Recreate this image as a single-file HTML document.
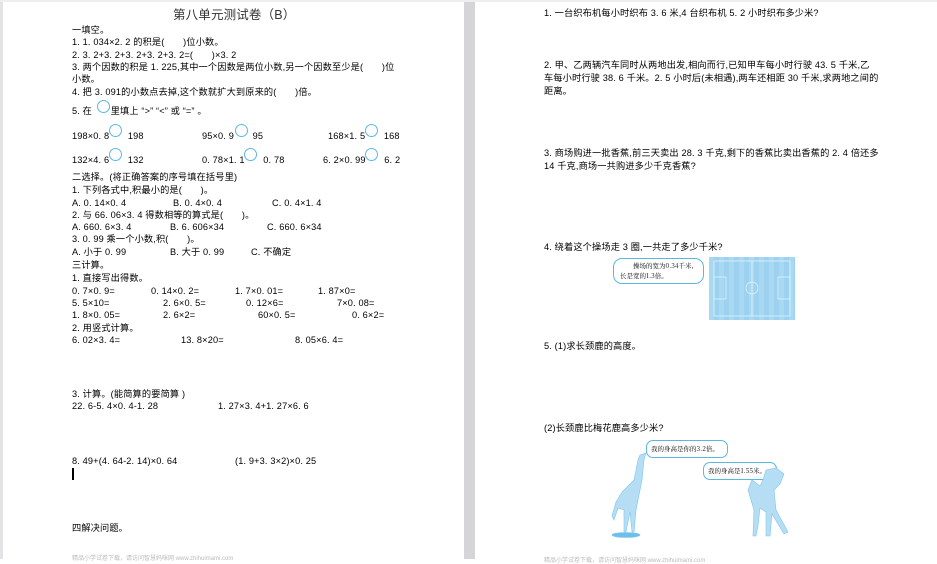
<!DOCTYPE html>
<html><head><meta charset="utf-8"><style>
body{margin:0;width:937px;height:559px;background:#fff;position:relative;overflow:hidden;font-family:"Liberation Sans","Noto Sans CJK SC",sans-serif;font-size:9.2px;color:#000;}
.t{position:absolute;white-space:nowrap;line-height:10px;letter-spacing:0.15px}
.c{position:absolute;width:13px;height:13px;border:1.3px solid #5ab8e0;border-radius:50%;box-sizing:border-box;}
.f{position:absolute;font-size:6px;color:#bbb;white-space:nowrap}
</style></head><body>
<div style="position:absolute;left:0;top:0;width:3px;height:559px;background:#e3e3e5"></div>
<div style="position:absolute;left:464px;top:0;width:11px;height:559px;background:#d5d5d7"></div>
<div style="position:absolute;left:0;top:0;width:937px;height:2px;background:#eee"></div>

<div class="t" style="left:173px;top:8px;font-size:12.5px;line-height:14px;color:#333">第八单元测试卷（B）</div>
<div class="t" style="left:72px;top:25px">一填空。</div>
<div class="t" style="left:72px;top:37px">1. 1. 034×2. 2 的积是(　　)位小数。</div>
<div class="t" style="left:72px;top:50px">2. 3. 2+3. 2+3. 2+3. 2+3. 2=(　　)×3. 2</div>
<div class="t" style="left:72px;top:62px">3. 两个因数的积是 1. 225,其中一个因数是两位小数,另一个因数至少是(　　)位</div>
<div class="t" style="left:72px;top:74px">小数。</div>
<div class="t" style="left:72px;top:87px">4. 把 3. 091的小数点去掉,这个数就扩大到原来的(　　)倍。</div>
<div class="t" style="left:72px;top:106px">5. 在　　里填上 “>” “<” 或 “=” 。</div>
<div class="c" style="left:97px;top:100px"></div>
<div class="t" style="left:72px;top:131px">198×0. 8　　198</div><div class="c" style="left:109px;top:124px"></div>
<div class="t" style="left:202px;top:131px">95×0. 9　　95</div><div class="c" style="left:235px;top:124px"></div>
<div class="t" style="left:328px;top:131px">168×1. 5　　168</div><div class="c" style="left:365px;top:124px"></div>
<div class="t" style="left:72px;top:155px">132×4. 6　　132</div><div class="c" style="left:109px;top:148px"></div>
<div class="t" style="left:202px;top:155px">0. 78×1. 1　　0. 78</div><div class="c" style="left:244px;top:148px"></div>
<div class="t" style="left:323px;top:155px">6. 2×0. 99　　6. 2</div><div class="c" style="left:365px;top:148px"></div>
<div class="t" style="left:72px;top:172px">二选择。(将正确答案的序号填在括号里)</div>
<div class="t" style="left:72px;top:185px">1. 下列各式中,积最小的是(　　)。</div>
<div class="t" style="left:72px;top:198px">A. 0. 14×0. 4</div><div class="t" style="left:173px;top:198px">B. 0. 4×0. 4</div><div class="t" style="left:272px;top:198px">C. 0. 4×1. 4</div>
<div class="t" style="left:72px;top:210px">2. 与 66. 06×3. 4 得数相等的算式是(　　)。</div>
<div class="t" style="left:72px;top:222px">A. 660. 6×3. 4</div><div class="t" style="left:170px;top:222px">B. 6. 606×34</div><div class="t" style="left:267px;top:222px">C. 660. 6×34</div>
<div class="t" style="left:72px;top:234px">3. 0. 99 乘一个小数,积(　　)。</div>
<div class="t" style="left:72px;top:247px">A. 小于 0. 99</div><div class="t" style="left:170px;top:247px">B. 大于 0. 99</div><div class="t" style="left:251px;top:247px">C. 不确定</div>
<div class="t" style="left:72px;top:260px">三计算。</div>
<div class="t" style="left:72px;top:273px">1. 直接写出得数。</div>
<div class="t" style="left:72px;top:286px">0. 7×0. 9=</div><div class="t" style="left:151px;top:286px">0. 14×0. 2=</div><div class="t" style="left:235px;top:286px">1. 7×0. 01=</div><div class="t" style="left:318px;top:286px">1. 87×0=</div>
<div class="t" style="left:72px;top:298px">5. 5×10=</div><div class="t" style="left:163px;top:298px">2. 6×0. 5=</div><div class="t" style="left:246px;top:298px">0. 12×6=</div><div class="t" style="left:337px;top:298px">7×0. 08=</div>
<div class="t" style="left:72px;top:310px">1. 8×0. 05=</div><div class="t" style="left:163px;top:310px">2. 6×2=</div><div class="t" style="left:258px;top:310px">60×0. 5=</div><div class="t" style="left:352px;top:310px">0. 6×2=</div>
<div class="t" style="left:72px;top:323px">2. 用竖式计算。</div>
<div class="t" style="left:72px;top:335px">6. 02×3. 4=</div><div class="t" style="left:181px;top:335px">13. 8×20=</div><div class="t" style="left:295px;top:335px">8. 05×6. 4=</div>
<div class="t" style="left:72px;top:389px">3. 计算。(能简算的要简算 )</div>
<div class="t" style="left:72px;top:401px">22. 6-5. 4×0. 4-1. 28</div><div class="t" style="left:218px;top:401px">1. 27×3. 4+1. 27×6. 6</div>
<div class="t" style="left:72px;top:456px">8. 49+(4. 64-2. 14)×0. 64</div><div class="t" style="left:235px;top:456px">(1. 9+3. 3×2)×0. 25</div>
<div style="position:absolute;left:72px;top:468px;width:2px;height:12px;background:#000"></div>
<div class="t" style="left:72px;top:523px">四解决问题。</div>
<div class="f" style="left:72px;top:553px">精品小学试卷下载，请访问智慧妈咪网 www.zhihuimami.com</div>

<div class="t" style="left:544px;top:8px">1. 一台织布机每小时织布 3. 6 米,4 台织布机 5. 2 小时织布多少米?</div>
<div class="t" style="left:544px;top:60px">2. 甲、乙两辆汽车同时从两地出发,相向而行,已知甲车每小时行驶 43. 5 千米,乙</div>
<div class="t" style="left:544px;top:73px">车每小时行驶 38. 6 千米。2. 5 小时后(未相遇),两车还相距 30 千米,求两地之间的</div>
<div class="t" style="left:544px;top:86px">距离。</div>
<div class="t" style="left:544px;top:148px">3. 商场购进一批香蕉,前三天卖出 28. 3 千克,剩下的香蕉比卖出香蕉的 2. 4 倍还多</div>
<div class="t" style="left:544px;top:161px">14 千克,商场一共购进多少千克香蕉?</div>
<div class="t" style="left:544px;top:242px">4. 绕着这个操场走 3 圈,一共走了多少千米?</div>
<div style="position:absolute;left:613px;top:258px;width:91px;height:26px;border:1px solid #5ab8e0;border-radius:9px;box-sizing:border-box;font-family:'Noto Serif CJK SC',serif;font-size:6.5px;line-height:10px;padding:2px 4px 0 6px">　　操场的宽为0.34千米,<br>长是宽的1.3倍。</div>
<div style="position:absolute;left:709px;top:257px;width:86px;height:63px;background:repeating-linear-gradient(90deg,#a9d8f2 0 5px,#9cd1ef 5px 10px)">
<svg width="86" height="63" style="position:absolute;left:0;top:0" fill="none" stroke="#e8f6fd" stroke-width="0.7"><rect x="5" y="4" width="76" height="55"/><line x1="43" y1="4" x2="43" y2="59"/><circle cx="43" cy="31" r="6"/><rect x="5" y="20" width="12" height="22"/><rect x="69" y="20" width="12" height="22"/></svg></div>
<div class="t" style="left:544px;top:341px">5. (1)求长颈鹿的高度。</div>
<div class="t" style="left:544px;top:423px">(2)长颈鹿比梅花鹿高多少米?</div>
<div style="position:absolute;left:646px;top:440px;width:82px;height:18px;border:1px solid #5ab8e0;border-radius:7px;box-sizing:border-box;font-family:'Noto Serif CJK SC',serif;font-size:6.5px;line-height:16px;padding-left:4px">我的身高是你的3.2倍。</div>
<div style="position:absolute;left:703px;top:462px;width:74px;height:18px;border:1px solid #5ab8e0;border-radius:7px;box-sizing:border-box;font-family:'Noto Serif CJK SC',serif;font-size:6.5px;line-height:16px;padding-left:4px">我的身高是1.55米。</div>
<svg style="position:absolute;left:600px;top:450px" width="210" height="90" fill="#b5def4" stroke="#7cc6ea" stroke-width="0.6">
<path d="M40 5 L46 3 L44 10 L42 30 L38 50 L36 60 L34 82 L32 82 L30 62 L26 82 L24 82 L24 60 L18 58 L14 70 L12 66 L16 52 L22 42 L34 30 L38 10 Z"/>
<ellipse cx="26" cy="85" rx="14" ry="2.5" fill="#6cbfe8"/>
<path d="M163 30 L166 20 L176 18 L184 24 L180 34 L174 40 L176 60 L188 82 L184 84 L172 64 L170 86 L166 86 L166 62 L160 58 L158 76 L156 86 L153 86 L154 60 L148 40 L152 30 L160 36 Z"/>
</svg>
<div class="f" style="left:544px;top:555px">精品小学试卷下载，请访问智慧妈咪网 www.zhihuimami.com</div>
</body></html>
